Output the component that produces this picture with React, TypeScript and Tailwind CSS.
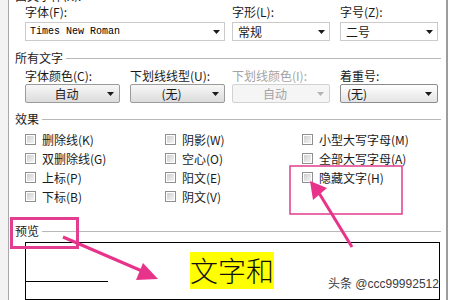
import React from 'react'

const cjk = "font-['Noto_Sans_CJK_SC',sans-serif]"

function Caret({ color = '#1a1a1a' }: { color?: string }) {
  return (
    <svg width="7" height="4" viewBox="0 0 7 4" className="shrink-0">
      <path d="M0 0h7L3.5 4z" fill={color} />
    </svg>
  )
}

function Heading({ label }: { label: string }) {
  return (
    <div className="flex items-center gap-[3px] h-[14px]">
      <span className="text-[12px] leading-[14px] text-[#1a1a1a]">{label}</span>
      <div className="flex-1 h-px bg-[#b8b8b8]" />
    </div>
  )
}

function Check({ label }: { label: string }) {
  return (
    <div className="flex items-center gap-[6px] h-[19px]">
      <div className="w-[11px] h-[11px] border border-[#8f8f8f] bg-white p-px">
        <div className="w-full h-full bg-linear-to-br from-[#cfcfcf] to-[#f4f4f4]" />
      </div>
      <span className="text-[12px] leading-[14px] text-[#1a1a1a]">{label}</span>
    </div>
  )
}

export default function App() {
  return (
    <div className={`w-[450px] h-[300px] overflow-hidden bg-white relative flex ${cjk}`}>
      {/* left frame edge */}
      <div className="w-[9px] shrink-0 bg-[#f3f3f3] border-r border-[#a9a9a9]" />

      <div className="w-[437px] shrink-0 pl-[6px] pr-[5px] flex flex-col">
        {/* cut-off label from the group above */}
        <div className="h-[3px] overflow-hidden flex items-end">
          <span className="text-[12px] leading-[12px] text-[#1a1a1a]">西文字体(X):</span>
        </div>

        {/* font / style / size */}
        <div className="pl-[10px] mt-[3px] flex text-[12px] leading-[14px] text-[#1a1a1a]">
          <span className="w-[200px]">字体(F):</span>
          <span className="w-[98px] ml-[7px]">字形(L):</span>
          <span className="w-[98px] ml-[10px]">字号(Z):</span>
        </div>
        <div className="pl-[10px] mt-[3px] flex">
          <div className="w-[200px] h-[19px] border border-[#cacaca] bg-white flex items-center pl-[4px] pr-[4px]">
            <span className="flex-1 font-['Liberation_Mono',monospace] text-[10px] leading-[12px] text-black">Times New Roman</span>
            <Caret />
          </div>
          <div className="w-[98px] ml-[7px] h-[19px] border border-[#cacaca] bg-white flex items-center pl-[5px] pr-[4px]">
            <span className="flex-1 text-[12px] leading-[14px] text-[#1a1a1a]">常规</span>
            <Caret />
          </div>
          <div className="w-[98px] ml-[10px] h-[19px] border border-[#cacaca] bg-white flex items-center pl-[5px] pr-[4px]">
            <span className="flex-1 text-[12px] leading-[14px] text-[#1a1a1a]">二号</span>
            <Caret />
          </div>
        </div>

        <div className="mt-[10px]">
          <Heading label="所有文字" />
        </div>

        <div className="pl-[10px] mt-[4px] flex text-[12px] leading-[14px] text-[#1a1a1a]">
          <span className="w-[95px]">字体颜色(C):</span>
          <span className="w-[95px] ml-[10px]">下划线线型(U):</span>
          <span className="w-[98px] ml-[7px] text-[#a3a3a3]">下划线颜色(I):</span>
          <span className="w-[98px] ml-[10px]">着重号:</span>
        </div>
        <div className="pl-[10px] mt-[1px] flex">
          <div className="w-[95px] h-[19px] rounded-[2px] border border-[#9b9b9b] bg-linear-to-b from-[#f7f7f7] to-[#dcdcdc] flex items-center pr-[5px]">
            <span className="flex-1 text-center text-[12px] leading-[14px] text-[#1a1a1a]">自动</span>
            <Caret />
          </div>
          <div className="w-[95px] ml-[10px] h-[19px] rounded-[2px] border border-[#9b9b9b] bg-linear-to-b from-[#f7f7f7] to-[#dcdcdc] flex items-center pr-[5px]">
            <span className="flex-1 text-center text-[12px] leading-[14px] text-[#1a1a1a]">(无)</span>
            <Caret />
          </div>
          <div className="w-[98px] ml-[7px] h-[19px] rounded-[2px] border border-[#d2d2d2] bg-[#f5f5f5] flex items-center pr-[5px]">
            <span className="flex-1 text-center text-[12px] leading-[14px] text-[#a3a3a3]">自动</span>
            <Caret color="#b5b5b5" />
          </div>
          <div className="w-[98px] ml-[10px] h-[19px] rounded-[2px] border border-[#8c8c8c] bg-linear-to-b from-[#ffffff] to-[#e4e4e4] flex items-center pl-[6px] pr-[5px]">
            <span className="flex-1 text-[12px] leading-[14px] text-[#1a1a1a]">(无)</span>
            <Caret />
          </div>
        </div>

        <div className="mt-[9px]">
          <Heading label="效果" />
        </div>

        <div className="pl-[10px] mt-[4px] flex">
          <div className="w-[140px] flex flex-col">
            <Check label="删除线(K)" />
            <Check label="双删除线(G)" />
            <Check label="上标(P)" />
            <Check label="下标(B)" />
          </div>
          <div className="w-[137px] flex flex-col">
            <Check label="阴影(W)" />
            <Check label="空心(O)" />
            <Check label="阳文(E)" />
            <Check label="阴文(V)" />
          </div>
          <div className="flex-1 flex flex-col">
            <Check label="小型大写字母(M)" />
            <Check label="全部大写字母(A)" />
            <Check label="隐藏文字(H)" />
          </div>
        </div>

        <div className="mt-[18px]">
          <Heading label="预览" />
        </div>

        {/* preview */}
        <div className="ml-[10px] mr-[1px] mt-[4px] h-[70px] border border-black relative flex items-start">
          <div className="w-[82px] h-[39px] border-b border-black shrink-0" />
          <span className="ml-[82px] mt-[9px] bg-[#ffff00] text-[28px] leading-[37px] text-[#111] font-light">文字和</span>
          <span className="absolute left-[302px] top-[34px] whitespace-nowrap font-['Liberation_Sans','Noto_Sans_CJK_SC',sans-serif] text-[12px] leading-[14px] text-[#3c3c3c] [text-shadow:0_0_2px_#fff,0_0_1px_#fff]">
            头条 @ccc99992512
          </span>
        </div>
      </div>

      {/* right frame edge */}
      <div className="w-[2px] shrink-0 bg-[#9d9d9d]" />
      <div className="flex-1 bg-white" />

      {/* annotation overlay */}
      <svg className="absolute inset-0 pointer-events-none" width="450" height="300" viewBox="0 0 450 300">
        <rect x="290" y="166" width="112" height="48" fill="none" stroke="#e23d8e" strokeWidth="1.5" />
        <rect x="11.5" y="218.5" width="66" height="29" fill="none" stroke="#e23d8e" strokeWidth="3" />
        <line x1="63" y1="237" x2="142" y2="271" stroke="#e8338b" strokeWidth="3" />
        <polygon points="158,279 143,263 136,280" fill="#e8338b" />
        <line x1="352" y1="247" x2="319" y2="193" stroke="#e8338b" strokeWidth="3" />
        <polygon points="310,181 327,188 313,200" fill="#e8338b" />
      </svg>
    </div>
  )
}
